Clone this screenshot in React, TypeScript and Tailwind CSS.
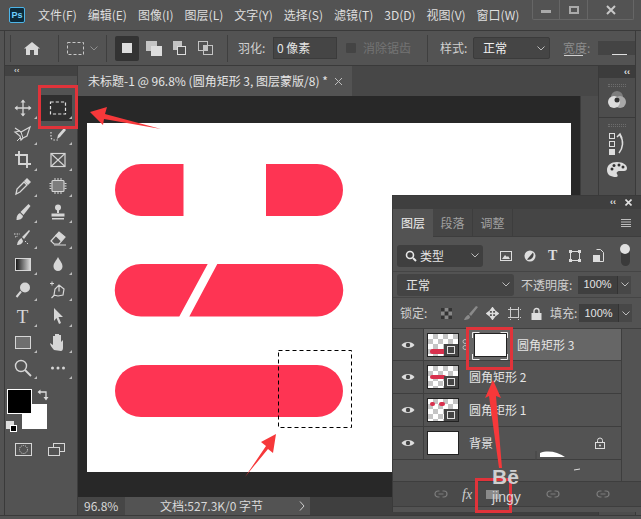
import React from "react";

const cjk = { fontFamily: '"Noto Sans CJK SC", "Noto Sans", sans-serif' };

const I = ({ children, w = 20, h = 20, vb = "0 0 20 20", className = "" }: { children: React.ReactNode; w?: number; h?: number; vb?: string; className?: string }) => (
  <svg width={w} height={h} viewBox={vb} fill="none" className={className}>{children}</svg>
);
const c = "#d6d6d6";

const Corner = () => (
  <div className="absolute right-[3px] bottom-[2px] w-0 h-0 border-l-[3px] border-l-transparent border-b-[3px] border-b-[#bcbcbc]" />
);

const tools: React.ReactNode[] = [
  <I><path d="M10 2.500v15M2.500 10h15" stroke={c} strokeWidth="1.300" /><path d="M10 1.500l-2.500 3h5zM10 18.500l-2.500-3h5zM1.500 10l3-2.500v5zM18.500 10l-3-2.500v5z" fill={c} /></I>,
  <I><rect x="2.500" y="4" width="15" height="12" stroke="#e2e2e2" strokeWidth="1.200" strokeDasharray="3.200 2" /></I>,
  <I><path d="M2 4l6 4 9-5-3 9-4 2-2 2-1-4-5-4 5-1" stroke={c} strokeWidth="1.200" /><path d="M8 8l2 6M4 17l3-3" stroke={c} /></I>,
  <I><path d="M3 8v5a3 3 0 0 0 3 3h4" stroke={c} strokeWidth="1.200" strokeDasharray="1.500 1.500" /><path d="M9 15l1-4 6-7 2 2-6 7z" fill={c} /></I>,
  <I><path d="M6 1v13h12M2 5h12v13" stroke={c} strokeWidth="1.900" /></I>,
  <I><rect x="3" y="3.500" width="14" height="13" stroke={c} strokeWidth="1.200" /><path d="M3 3.500l14 13M17 3.500L3 16.500" stroke={c} strokeWidth="1.100" /></I>,
  <I><path d="M3 18l1-5 7-7 3 3-7 7z" stroke={c} strokeWidth="1.300" /><path d="M11 5l3-3 4 4-3 3z" fill={c} /></I>,
  <I><rect x="4" y="4.500" width="12" height="11" rx="1" fill="#7d7d7d" stroke={c} strokeWidth="1.100" /><path d="M1.500 7.500h2M1.500 10h2M1.500 12.500h2M16.500 7.500h2M16.500 10h2M16.500 12.500h2M7 2v2M10 2v2M13 2v2M7 16v2M10 16v2M13 16v2" stroke={c} /></I>,
  <I><path d="M15.500 2l2 2-7 9-3-3z" fill={c} /><path d="M7 11c-2.500 1-3.500 3-3.500 7 3 0 6-1 6.500-4z" fill={c} /></I>,
  <I><circle cx="10" cy="5.500" r="3" fill={c} /><path d="M9 8h2v3H9zM3.500 11.500h13v3h-13zM4 16h12v1.500H4z" fill={c} /></I>,
  <I><path d="M16 2l1 1-6 8-2-2zM8.500 10c-2 1-4 3-4.500 7 2.500 0 5.500-1 6-4z" fill={c} /><path d="M1 6l6 0M2 9l3-1M12 13l3 3" stroke={c} strokeDasharray="1.500 1.200" /></I>,
  <I><path d="M3 13l8-9 6 5-6 7H6z" stroke={c} strokeWidth="1.200" /><path d="M11 4l6 5-4 4.500-6-6z" fill={c} /><path d="M6 17h12" stroke={c} /></I>,
  <svg width="16" height="13" viewBox="0 0 16 13"><defs><linearGradient id="gr"><stop offset="0" stopColor="#111" /><stop offset="1" stopColor="#ddd" /></linearGradient></defs><rect x="0.500" y="0.500" width="15" height="12" fill="url(#gr)" stroke={c} /></svg>,
  <I><path d="M10 3c2 4 4.500 6 4.500 9.500a4.500 4.500 0 0 1-9 0C5.500 9 8 7 10 3z" fill={c} /></I>,
  <I><circle cx="12" cy="7.500" r="5" fill={c} /><path d="M8 11.500L3.500 17" stroke={c} strokeWidth="2" /></I>,
  <I><path d="M4 1.500v4M2 3.500h4" stroke={c} /><path d="M6 15l1-6 4-4 5 4-1 6-5 1z M3.500 18l3-3M11 5.500v6" stroke={c} strokeWidth="1.200" /></I>,
  <span className="text-[19px] leading-none text-[#d6d6d6] font-normal" style={{ fontFamily: '"Liberation Serif", serif' }}>T</span>,
  <I><path d="M6 2l9 9h-4.500l2.500 6-2 1-2.500-6L6 15z" fill={c} /></I>,
  <svg width="16" height="13" viewBox="0 0 16 13"><rect x="0.500" y="0.500" width="15" height="12" fill="#6f6f6f" stroke={c} /></svg>,
  <I><path d="M6 18c-2-2-4-5-4-7l3 2V4h2v5-7h2v7-7h2v7-6h2v7l2-2v8c0 2-1 3-2 3z" fill={c} /></I>,
  <I><circle cx="8" cy="8" r="5.500" stroke={c} strokeWidth="1.400" /><path d="M12 12l6 6" stroke={c} strokeWidth="1.800" /></I>,
  <I><circle cx="4.500" cy="10" r="1.500" fill={c} /><circle cx="10" cy="10" r="1.500" fill={c} /><circle cx="15.500" cy="10" r="1.500" fill={c} /></I>,
];

const Tools = () => (
  <div className="shrink-0 flex flex-col bg-[#535353] border-l border-l-[#3a3a3a] ml-[4px] border-r border-r-[#3d3d3d] w-[74px]">
    <div className="h-[10px] bg-[#424242] flex items-center pl-[9px] text-[8px] leading-none text-[#d0d0d0] font-bold" style={{ fontFamily: '"Liberation Sans"' }}>‹‹</div>
    <div className="grid grid-cols-[35px_35px] auto-rows-[26px] pt-[19px]">
      {tools.map((t, i) => (
        <div key={i} className="relative flex items-center justify-center">
          {i === 1 && <div className="absolute left-[1px] top-0 w-[31px] h-[26px] bg-[#2f2f2f]" />}
          <div className="relative flex items-center justify-center">{t}</div>
          <Corner />
        </div>
      ))}
    </div>
    <div className="relative h-[42px] mt-[8px] ml-[17px]">
      <div className="absolute left-[0px] top-[15px] w-[25px] h-[25px] bg-white" />
      <div className="absolute left-[-15px] top-0 w-[25px] h-[25px] bg-black border border-white" />
      <svg className="absolute left-[15px] top-0" width="12" height="12" viewBox="0 0 12 12"><path d="M3 3h6v6" stroke="#ddd" fill="none" strokeWidth="1.300" /><path d="M0.500 3l3-2.500v5zM9 11.500L6.500 8h5z" fill="#ddd" /></svg>
      <div className="absolute left-[-16px] top-[32px] w-[8px] h-[8px] bg-[#ddd]" />
      <div className="absolute left-[-12px] top-[36px] w-[7px] h-[7px] bg-black border border-white" />
    </div>
    <div className="flex gap-[16px] pl-[10px] mt-[12px]">
      <svg width="17" height="13" viewBox="0 0 17 13"><rect x="0.500" y="0.500" width="16" height="12" stroke={c} fill="none" /><circle cx="8.500" cy="6.500" r="4" stroke={c} strokeDasharray="1 1" fill="none" /></svg>
      <svg width="17" height="13" viewBox="0 0 17 13"><rect x="5.500" y="0.500" width="11" height="8" stroke={c} fill="none" /><rect x="0.500" y="4.500" width="11" height="8" stroke={c} fill="#535353" /></svg>
    </div>
  </div>
);

const Menu = () => {
  const items = ["文件(F)", "编辑(E)", "图像(I)", "图层(L)", "文字(Y)", "选择(S)", "滤镜(T)", "3D(D)", "视图(V)", "窗口(W)"];
  return (
    <div className="h-[31px] shrink-0 flex items-center border-b border-[#3a3a3a] relative" style={cjk}>
      <div className="ml-[9px] w-[16px] h-[16px] bg-[#0d2a3a] border border-[#4db5e8] rounded-[2px] flex items-center justify-center text-[9px] font-bold text-[#6fd0ff] leading-none" style={{ fontFamily: '"Liberation Sans"' }}>Ps</div>
      <div className="flex ml-[13px] gap-[11px] text-[12px] text-[#dedede]">
        {items.map((m) => <span key={m}>{m}</span>)}
      </div>
      <div className="absolute right-[7px] top-0 w-[102px] h-[20px] border border-t-0 border-[#666666] rounded-b-[2px] flex">
        <div className="w-[27px] border-r border-[#666666] flex items-center justify-center pt-[4px]"><div className="w-[10px] h-[3px] bg-[#aaaaaa]" /></div>
        <div className="w-[28px] border-r border-[#666666] flex items-center justify-center"><div className="w-[10px] h-[8px] border-2 border-[#aaaaaa]" /></div>
        <div className="flex-1 flex items-center justify-center">
          <svg width="10" height="10" viewBox="0 0 10 10"><path d="M1 1l8 8M9 1l-8 8" stroke="#c8c8c8" strokeWidth="2" /></svg>
        </div>
      </div>
    </div>
  );
};

const Sep = ({ ml = 0 }: { ml?: number }) => (
  <div className="w-px h-[27px] bg-[#3f3f3f] shrink-0" style={{ marginLeft: ml }} />
);

const Chevron = ({ color = "#bcbcbc" }: { color?: string }) => (
  <svg width="8" height="5" viewBox="0 0 8 5"><path d="M0.500 0.500L4 4 7.500 0.500" stroke={color} fill="none" /></svg>
);

const Options = () => (
  <div className="h-[35px] shrink-0 flex items-center ml-[4px] mr-[5px] border-b border-[#3a3a3a] border-l border-l-[#3a3a3a] border-r border-r-[#3a3a3a] relative" style={cjk}>
    <Sep ml={5} />
    <svg className="ml-[13px]" width="16" height="13" viewBox="0 0 16 13"><path d="M8 0L0 6.500h2V13h4V8h4v5h4V6.500h2z" fill="#d8d8d8" /></svg>
    <Sep ml={18} />
    <svg className="ml-[8px]" width="17" height="13" viewBox="0 0 17 13"><rect x="0.500" y="0.500" width="16" height="12" stroke="#c8c8c8" strokeDasharray="3 2" fill="none" /></svg>
    <div className="ml-[6px] flex"><Chevron color="#8f8f8f" /></div>
    <Sep ml={8} />
    <div className="ml-[8px] w-[24px] h-[25px] bg-[#333333] rounded-[2px] flex items-center justify-center"><div className="w-[10px] h-[10px] bg-[#dddddd]" /></div>
    <svg className="ml-[7px]" width="16" height="15" viewBox="0 0 16 15"><rect x="0" y="0" width="11" height="10" fill="#c4c4c4" /><rect x="5" y="5" width="11" height="10" fill="#dddddd" /></svg>
    <svg className="ml-[11px]" width="13" height="14" viewBox="0 0 13 14"><rect x="0" y="0" width="9" height="9" fill="#c4c4c4" /><rect x="4.500" y="5.500" width="8" height="8" fill="#4f4f4f" stroke="#ddd" /></svg>
    <svg className="ml-[12px]" width="15" height="14" viewBox="0 0 15 14"><rect x="0.500" y="0.500" width="9" height="9" fill="none" stroke="#c4c4c4" /><rect x="5.500" y="4.500" width="9" height="9" fill="none" stroke="#c4c4c4" /><rect x="5.500" y="4.500" width="4" height="5" fill="#c4c4c4" /></svg>
    <Sep ml={14} />
    <span className="ml-[10px] text-[12px] text-[#d0d0d0] w-[35px] shrink-0">羽化:</span>
    <div className="w-[64px] h-[22px] bg-[#454545] border border-[#3b3b3b] text-[12px] text-[#e6e6e6] pl-[3px] flex items-center shrink-0">0 像素</div>
    <div className="ml-[9px] w-[10px] h-[10px] bg-[#444444] rounded-[1px] shrink-0" />
    <span className="ml-[7px] text-[12px] text-[#747474] whitespace-nowrap">消除锯齿</span>
    <Sep ml={16} />
    <span className="ml-[12px] text-[12px] text-[#d0d0d0] w-[33px] shrink-0">样式:</span>
    <div className="w-[77px] h-[22px] bg-[#454545] border border-[#3b3b3b] rounded-[2px] text-[12px] text-[#f0f0f0] pl-[9px] pr-[4px] flex items-center justify-between shrink-0">正常<Chevron /></div>
    <span className="ml-[13px] text-[12px] text-[#8d8d8d] whitespace-nowrap">宽度:</span>
    <div className="absolute right-0 top-[10px] w-[37px] h-[14px] bg-[#444444]">
      <div className="absolute left-[14px] bottom-0 w-[15px] h-px bg-[#e0e0e0]" />
    </div>
    <div className="absolute left-[559px] top-[24px] w-[19px] h-px bg-[#d0d0d0]" />
  </div>
);

const Canvas = () => (
  <svg width="484" height="349" viewBox="0 0 484 349" className="bg-white block">
    <g fill="#fe3453">
      <path d="M96.500 41H54a26 26 0 0 0 0 52h42.500z" />
      <path d="M179 41h51a26 26 0 0 1 0 52h-51z" />
      <path d="M120.700 141H54a26.250 26.250 0 0 0 0 52.500h38.300z" />
      <path d="M130.300 141H230a26.250 26.250 0 0 1 0 52.500H102.300z" />
      <path d="M54 242h176a26 26 0 0 1 0 52H54a26 26 0 0 1 0-52z" />
    </g>
    <rect x="191.500" y="227.500" width="73" height="77" fill="none" stroke="#000" strokeWidth="1" strokeDasharray="4 3" />
  </svg>
);

const Center = () => (
  <div className="flex-1 flex flex-col min-w-0">
    <div className="h-[30px] shrink-0 flex bg-[#474747]" style={cjk}>
      <div className="w-[274px] bg-[#535353] flex items-center pl-[10px] text-[12px] text-[#e4e4e4] whitespace-nowrap relative">
        未标题-1 @ 96.8% (圆角矩形 3, 图层蒙版/8) *
        <svg className="absolute left-[257px] top-[12px]" width="7" height="7" viewBox="0 0 7 7"><path d="M0 0l7 7M7 0L0 7" stroke="#bdbdbd" /></svg>
      </div>
    </div>
    <div className="flex-1 flex min-h-0">
      <div className="flex-1 bg-[#282828] pl-[9px] pt-[27px]"><Canvas /></div>
      <div className="w-[18px] bg-[#4d4d4d] border-l border-[#3c3c3c]" />
    </div>
    <div className="h-[18px] shrink-0 flex bg-[#3f3f3f] text-[12px] text-[#d8d8d8] leading-none" style={cjk}>
      <div className="w-[47px] bg-[#464646] flex items-center pl-[6px]">96.8%</div>
      <div className="w-[185px] bg-[#535353] flex items-center pl-[35px] relative whitespace-nowrap">
        文档:527.3K/0 字节
        <svg className="absolute right-[5px] top-[4px]" width="6" height="10" viewBox="0 0 6 10"><path d="M1 0.500l4 4.500-4 4.500" stroke="#cfcfcf" fill="none" /></svg>
      </div>
    </div>
  </div>
);

const Dock = () => (
  <div className="w-[38px] shrink-0 flex flex-col mr-[5px] border-x border-[#3a3a3a]">
    <div className="h-[12px] bg-[#3c3c3c] flex justify-end items-center pr-[5px] text-[9px] leading-none font-bold text-[#e5e5e5]" style={{ fontFamily: '"Liberation Sans"' }}>‹‹</div>
    <div className="h-[40px] bg-[#4d4d4d] border-b border-[#3a3a3a] flex flex-col items-center pt-[6px]">
      <div className="w-[18px] h-[3px] border-y border-dotted border-[#6d6d6d]" />
      <svg className="mt-[4px]" width="18" height="17" viewBox="0 0 18 17"><circle cx="9" cy="6" r="6" fill="#7d7d7d" /><circle cx="12" cy="11" r="6" fill="#a8a8a8" /><circle cx="6" cy="11" r="6" fill="#dcdcdc" /><circle cx="9" cy="9" r="2.500" fill="#333" /></svg>
    </div>
    <div className="flex-1 bg-[#4d4d4d] flex flex-col items-center pt-[6px] gap-[5px]">
      <div className="w-[18px] h-[3px] border-y border-dotted border-[#6d6d6d]" />
      <svg width="18" height="24" viewBox="0 0 18 24"><rect x="1.500" y="1.500" width="5" height="5" stroke="#ddd" fill="none" /><rect x="1.500" y="9.500" width="5" height="5" stroke="#ddd" fill="none" /><rect x="1" y="17" width="6" height="6" fill="#ddd" /><path d="M9 5l3-3 2 4M12 3c4 6 3 13-1 18" stroke="#ddd" strokeWidth="1.500" fill="none" /></svg>
      <svg width="20" height="15" viewBox="0 0 20 15" className="mt-[1px]"><path d="M10 0C4 0 0 3 0 8s4 7 9 7c2 0 2-2 1-3s0-3 3-3h4c2 0 3-1 3-3 0-3-4-6-10-6z" fill="#ddd" /><circle cx="5" cy="7" r="1.500" fill="#333" /><circle cx="7" cy="3.500" r="1.500" fill="#333" /><circle cx="12" cy="3" r="1.500" fill="#333" /><circle cx="16" cy="5" r="1.500" fill="#333" /></svg>
    </div>
  </div>
);

const Thumb = ({ children, checker = true }: { children?: React.ReactNode; checker?: boolean }) => (
  <div className="relative w-[32px] h-[24px] border border-[#222] bg-white shrink-0 overflow-hidden" style={checker ? { backgroundImage: "repeating-conic-gradient(#c4c4c4 0 25%, #fff 0 50%)", backgroundSize: "10px 10px" } : undefined}>
    {children}
  </div>
);

const ShapeBadge = () => (
  <div className="absolute right-0 bottom-0 w-[14px] h-[12px] bg-[#454545] flex items-center justify-center">
    <div className="w-[8px] h-[8px] border border-[#e0e0e0]" />
  </div>
);

const Pink = ({ k }: { k: 1 | 2 | 3 }) => (
  <svg className="absolute left-0 top-0" width="30" height="22" viewBox="0 0 30 22">
    {k === 3 && <rect x="2" y="15" width="16" height="5" rx="2.500" fill="#d8304d" />}
    {k === 2 && <rect x="2" y="9" width="16" height="4" rx="2" fill="#d8304d" />}
    {k === 1 && <g fill="#d8304d"><rect x="2" y="3" width="5" height="4" rx="2" /><rect x="11" y="3" width="6" height="4" rx="2" /></g>}
  </svg>
);

const Row = ({ thumb, mask, name, sel, last, h = 33 }: { thumb: React.ReactNode; mask?: boolean; name: string; sel?: boolean; last?: React.ReactNode; h?: number }) => (
  <div className="flex shrink-0" style={{ height: h }}>
    <div className="w-[31px] shrink-0 border-r border-b border-[#3e3e3e] flex items-center justify-center">
      <svg width="14" height="10" viewBox="0 0 14 10"><path d="M0.500 5C3 1 11 1 13.500 5 11 9 3 9 0.500 5z" fill="#dedede" /><circle cx="7" cy="5" r="2.200" fill="#444" /></svg>
    </div>
    <div className={`flex-1 flex items-center pl-[3px] border-b border-[#3e3e3e] text-[12px] text-[#e4e4e4] whitespace-nowrap ${sel ? "bg-[#666666]" : ""}`}>
      {thumb}
      {mask && (
        <>
          <svg className="ml-[3px] shrink-0" width="6" height="11" viewBox="0 0 6 11"><path d="M3 0.500a2 2 0 0 1 2 2 2 2 0 0 1-4 0 2 2 0 0 1 2-2zM3 6.500a2 2 0 0 1 2 2 2 2 0 0 1-4 0 2 2 0 0 1 2-2z" stroke="#bbb" fill="none" /></svg>
          <div className="ml-[6px] w-[33px] h-[24px] bg-white border border-[#222] shrink-0" />
        </>
      )}
      <span className="ml-[10px]">{name}</span>
      {last}
    </div>
  </div>
);

const Link = () => (
  <svg width="14" height="8" viewBox="0 0 14 8"><path d="M5.500 1H4a3 3 0 0 0 0 6h1.500M8.500 1H10a3 3 0 0 1 0 6H8.500M4.500 4h5" stroke="#7d7d7d" fill="none" strokeWidth="1.200" /></svg>
);

const Layers = () => (
  <div className="absolute left-[392px] top-[195px] w-[249px] h-[317px] bg-[#535353] border-t border-l border-[#3a3a3a] flex flex-col" style={cjk}>
    <div className="h-[13px] shrink-0 bg-[#3f3f3f] flex items-center justify-end gap-[9px] pr-[9px]">
      <span className="text-[9px] leading-none font-bold text-[#e5e5e5]" style={{ fontFamily: '"Liberation Sans"' }}>‹‹</span>
      <svg width="7" height="7" viewBox="0 0 7 7"><path d="M0.500 0.500l6 6M6.500 0.500l-6 6" stroke="#e0e0e0" strokeWidth="1.600" /></svg>
    </div>
    <div className="h-[28px] shrink-0 bg-[#454545] border-b border-[#3d3d3d] flex items-stretch text-[12px] relative">
      <div className="w-[40px] bg-[#535353] text-[#ededed] flex items-center justify-center h-[28px]">图层</div>
      <div className="w-[40px] border-r border-[#3d3d3d] text-[#a0a0a0] flex items-center justify-center">段落</div>
      <div className="w-[40px] border-r border-[#3d3d3d] text-[#a0a0a0] flex items-center justify-center">调整</div>
      <svg className="absolute right-[10px] top-[10px]" width="10" height="8" viewBox="0 0 10 8"><path d="M0 0.500h10M0 3h10M0 5.500h10M0 7.500h10" stroke="#bdbdbd" /></svg>
    </div>
    <div className="flex items-center h-[35px] shrink-0 pl-[4px] pt-[3px] border-b border-[#454545]">
      <div className="w-[86px] h-[22px] bg-[#3f3f3f] rounded-[3px] flex items-center pl-[8px] pr-[4px] text-[12px] text-[#e4e4e4]">
        <svg width="12" height="12" viewBox="0 0 12 12"><circle cx="5" cy="5" r="3.500" stroke="#e8e8e8" strokeWidth="1.600" fill="none" /><path d="M8 8l3 3" stroke="#e8e8e8" strokeWidth="2" /></svg>
        <span className="ml-[3px] flex-1">类型</span><Chevron />
      </div>
      <div className="flex items-center ml-[17px] gap-[12px]">
        <svg width="12" height="10" viewBox="0 0 12 10"><rect x="0.500" y="0.500" width="11" height="9" stroke="#ddd" fill="none" /><path d="M2 8l3-4 2 2 1-1 2 3z" fill="#ddd" /></svg>
        <svg width="12" height="12" viewBox="0 0 12 12"><circle cx="6" cy="6" r="5.500" fill="#ddd" /><path d="M9 2.500A5 5 0 0 1 3 9.500z" fill="#444" /></svg>
        <span className="text-[14px] leading-none font-bold text-[#ddd]" style={{ fontFamily: '"Liberation Serif"' }}>T</span>
        <svg width="12" height="12" viewBox="0 0 12 12"><rect x="1.500" y="1.500" width="9" height="9" stroke="#ddd" fill="none" /><path d="M0 0h3v3H0zM9 0h3v3H9zM0 9h3v3H0zM9 9h3v3H9z" fill="#ddd" /></svg>
        <svg width="11" height="13" viewBox="0 0 11 13"><path d="M3.500 0.500h4l3 3v9h-5" stroke="#ddd" fill="none" /><rect x="0" y="6" width="7" height="7" fill="#ddd" /></svg>
        <div className="relative w-[9px] h-[20px] bg-[#3a3a3a] rounded-full ml-[5px]"><div className="absolute -left-[1px] -top-[2px] w-[10px] h-[10px] rounded-full bg-[#e0e0e0]" /></div>
      </div>
    </div>
    <div className="flex items-center h-[26px] shrink-0 pl-[4px] border-b border-[#454545]">
      <div className="w-[117px] h-[22px] bg-[#444444] rounded-[3px] flex items-center justify-between pl-[9px] pr-[4px] text-[12px] text-[#e4e4e4]">正常<Chevron /></div>
      <span className="ml-[7px] w-[57px] text-[12px] text-[#d0d0d0] whitespace-nowrap">不透明度:</span>
      <div className="w-[39px] h-[18px] bg-[#3f3f3f] text-[11px] text-[#e4e4e4] flex items-center justify-center" style={{ fontFamily: '"Liberation Sans"' }}>100%</div>
      <div className="w-[14px] h-[18px] bg-[#474747] border-l border-[#333] flex items-center justify-center"><Chevron /></div>
    </div>
    <div className="flex items-center h-[31px] shrink-0 pl-[7px] border-b border-[#3e3e3e] text-[12px] text-[#d0d0d0]">
      <span className="w-[36px] whitespace-nowrap">锁定:</span>
      <svg className="ml-[5px]" width="11" height="11" viewBox="0 0 11 11"><rect width="11" height="11" fill="#888" /><path d="M0 0h3.600v3.600H0zM7.400 0H11v3.600H7.400zM3.600 3.600h3.800v3.800H3.600zM0 7.400h3.600V11H0zM7.400 7.400H11V11H7.400z" fill="#333" /></svg>
      <svg className="ml-[12px]" width="14" height="14" viewBox="0 0 14 14"><path d="M12 0l2 1-7 9-2-2zM5 9c-2 0-4 2-5 5 3 0 6-1 6-3z" fill="#8a8a8a" /></svg>
      <svg className="ml-[8px]" width="13" height="13" viewBox="0 0 20 20"><path d="M10 1v18M1 10h18M10 1L7 5h6zM10 19l-3-4h6zM1 10l4-3v6zM19 10l-4-3v6z" stroke="#ddd" strokeWidth="2" fill="#ddd" /></svg>
      <svg className="ml-[9px]" width="13" height="13" viewBox="0 0 13 13"><rect x="2.500" y="2.500" width="8" height="8" stroke="#ccc" fill="none" /><path d="M0 2.500h13M2.500 0v13M0 10.500h13M10.500 0v13" stroke="#ccc" strokeDasharray="2 2" /></svg>
      <svg className="ml-[10px]" width="11" height="13" viewBox="0 0 11 13"><path d="M3 6V4a2.500 2.500 0 0 1 5 0v2" stroke="#ddd" fill="none" strokeWidth="1.400" /><rect x="0.500" y="6" width="10" height="7" fill="#ddd" /></svg>
      <span className="ml-[8px] w-[29px] whitespace-nowrap">填充:</span>
      <div className="w-[39px] h-[18px] bg-[#3f3f3f] text-[11px] text-[#e4e4e4] flex items-center justify-center" style={{ fontFamily: '"Liberation Sans"' }}>100%</div>
      <div className="w-[14px] h-[18px] bg-[#474747] border-l border-[#333] flex items-center justify-center"><Chevron /></div>
    </div>
    <div className="h-[152px] shrink-0 flex">
      <div className="w-[228px] shrink-0 flex flex-col">
        <Row sel h={32} mask name="圆角矩形 3" thumb={<Thumb><Pink k={3} /><ShapeBadge /></Thumb>} />
        <Row name="圆角矩形 2" thumb={<Thumb><Pink k={2} /><ShapeBadge /></Thumb>} />
        <Row name="圆角矩形 1" thumb={<Thumb><Pink k={1} /><ShapeBadge /></Thumb>} />
        <Row name="背景" thumb={<Thumb checker={false} />} last={
          <svg className="ml-auto mr-[16px]" width="10" height="12" viewBox="0 0 10 12"><path d="M2.500 6V3.500a2.500 2.500 0 0 1 5 0V6" stroke="#ddd" fill="none" /><rect x="0.500" y="5.500" width="9" height="6" fill="none" stroke="#ddd" /><circle cx="5" cy="8.500" r="1" fill="#ddd" /></svg>
        } />
        <div className="flex-1" />
      </div>
      <div className="flex-1 border-l border-[#3e3e3e]" />
    </div>
    <div className="h-[26px] shrink-0 bg-[#4a4a4a] border-y border-[#3e3e3e] flex items-center pl-[41px]">
      <Link />
      <span className="ml-[14px] text-[14px] italic text-[#cfcfcf]" style={{ fontFamily: '"Liberation Serif"' }}>fx</span>
      <div className="ml-[14px] w-[13px] h-[9px] bg-[#8a8a8a]" />
      <div className="ml-[47px] flex"><Link /></div>
      <div className="ml-[36px] flex"><Link /></div>
    </div>
    <div className="flex-1 bg-[#535353]" />
  </div>
);

const Overlays = () => (
  <>
    <div className="absolute left-[38px] top-[85px] w-[40px] h-[44px] border-[3px] border-[#e0333a]" />
    <div className="absolute left-[466px] top-[327px] w-[47px] h-[43px] border-[3px] border-[#e0333a]" />
    <div className="absolute left-[475px] top-[478px] w-[37px] h-[35px] border-[3px] border-[#e0333a]" />
    <svg className="absolute left-[472px] top-[332px]" width="36" height="28" viewBox="0 0 36 28"><path d="M0.500 6V0.500h7M28.500 0.500h7V6M35.500 22v5.500h-7M7.500 27.500h-7V22" stroke="#eee" fill="none" /></svg>
    <svg className="absolute left-0 top-0 pointer-events-none" width="641" height="519" viewBox="0 0 641 519">
      <path d="M90 112L107 107 105 114 161 129 104 119 103 125z" fill="#f6383a" />
      <path d="M276 434L261 442 266 446 245 477 268 449 273 453z" fill="#f6383a" />
      <path d="M493 380L501 398 496 396 502 468 499 468 489 396 485 398z" fill="#f6383a" />
      <path d="M540 457v-4c8-3 18-1 25 4z" fill="#fff" />
      <path d="M574 470l6-1" stroke="#ddd" />
      <path d="M536 451v9" stroke="#444" />
    </svg>
    <div className="absolute left-[492px] top-[466px] text-[21px] font-bold leading-none text-[#cfcfcf]" style={{ fontFamily: '"Liberation Sans"' }}>Bē</div>
    <div className="absolute left-[492px] top-[490px] text-[14px] leading-none text-[#d5d5d5]" style={{ fontFamily: '"Liberation Sans"' }}>jingy</div>
  </>
);

export default function App() {
  return (
    <div className="relative w-[641px] h-[519px] bg-[#535353] overflow-hidden flex flex-col select-none" style={{ fontFamily: '"Noto Sans CJK SC", sans-serif' }}>
      <Menu />
      <Options />
      <div className="flex-1 flex min-h-0 mb-[3px] border-b border-[#3a3a3a]">
        <Tools />
        <Center />
        <Dock />
      </div>
      <Layers />
      <Overlays />
    </div>
  );
}
